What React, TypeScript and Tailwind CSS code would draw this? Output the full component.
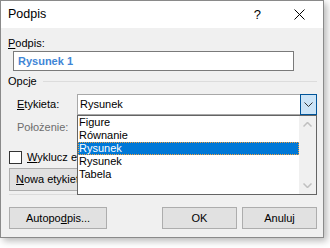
import React from "react";

const font = { fontFamily: '"Liberation Sans", Arial, sans-serif' };

function Btn({ children, className = "" }: { children: React.ReactNode; className?: string }) {
  return (
    <div
      className={
        "h-[22px] flex items-center justify-center bg-[#e1e1e1] border border-[#adadad] text-[11px] text-black " +
        className
      }
    >
      {children}
    </div>
  );
}

export default function App() {
  const items = ["Figure", "Równanie", "Rysunek", "Rysunek", "Tabela"];
  return (
    <div className="w-[330px] h-[248px] bg-white overflow-hidden" style={font}>
      <div className="relative w-[324px] h-[238px] border border-[#8a8a8a] bg-[#f0f0f0] shadow-[3px_3px_7px_rgba(0,0,0,0.28)] flex flex-col">
        {/* Title bar */}
        <div className="h-[27px] bg-white flex items-center shrink-0">
          <span className="ml-[7px] text-[12.5px] text-black">Podpis</span>
          <span className="ml-auto mr-[33px] text-[13px] text-black">?</span>
          <svg width="11" height="11" viewBox="0 0 11 11" className="mr-[18px]">
            <path d="M0.5 0.5 L10.5 10.5 M10.5 0.5 L0.5 10.5" stroke="#000" strokeWidth="1" />
          </svg>
        </div>

        {/* Body */}
        <div className="flex flex-col text-[11px] text-black">
          <div className="mt-[7px] ml-[7px] h-[16px] leading-[16px]">
            <u>P</u>odpis:
          </div>
          <div className="ml-[12px] w-[281px] h-[20px] border border-[#7a7a7a] bg-white flex items-center pl-[4px]">
            <span className="font-bold text-[#3f86d6]">Rysunek 1</span>
          </div>
          <div className="mt-[2px] ml-[7px] h-[16px] flex items-center">
            <span>Opcje</span>
            <div className="ml-[6px] flex-1 h-px bg-[#dcdcdc] mr-[6px]" />
          </div>
          <div className="mt-[5px] h-[21px] flex items-center">
            <span className="ml-[16px] w-[60px]">
              <u>E</u>tykieta:
            </span>
            <div className="w-[240px] h-[21px] border border-[#a8a8a8] bg-white flex items-center">
              <span className="ml-[2px] flex-1">Rysunek</span>
              <div className="w-[17px] h-[21px] -mr-px -mt-px -mb-px border border-[#005499] bg-[#cce4f7] flex items-center justify-center">
                <svg width="9" height="5" viewBox="0 0 9 5">
                  <path d="M0.5 0.5 L4.5 4.5 L8.5 0.5" stroke="#333" strokeWidth="1" fill="none" />
                </svg>
              </div>
            </div>
          </div>
          <div className="mt-[4px] ml-[16px] h-[16px] leading-[16px] text-[#6d6d6d]">Położenie:</div>
          <div className="mt-[15px] ml-[8px] h-[14px] flex items-center">
            <div className="w-[13px] h-[13px] border border-[#333] bg-white" />
            <span className="ml-[5px]">
              <u>W</u>yklucz etykietę z podpisu
            </span>
          </div>
          <div className="mt-[4px] ml-[8px] flex">
            <Btn className="w-[110px] h-[23px] justify-start pl-[6px]">
              <span>
                <u>N</u>owa etykieta...
              </span>
            </Btn>
          </div>
          <div className="mt-[3px] ml-[8px] mr-[6px] h-px bg-[#dcdcdc]" />
          <div className="mt-[12px] ml-[8px] flex">
            <Btn className="w-[98px]">
              <span>
                Autopo<u>d</u>pis...
              </span>
            </Btn>
            <Btn className="ml-[55px] w-[75px]">OK</Btn>
            <Btn className="ml-[5px] w-[75px]">Anuluj</Btn>
          </div>
        </div>

        {/* Dropdown list overlay */}
        <div className="absolute left-[76px] top-[114px] w-[240px] h-[80px] border border-[#646464] bg-white flex text-[11px] text-black">
          <div className="flex-1 flex flex-col">
            {items.map((it, i) => (
              <div
                key={i}
                className={
                  "h-[13px] leading-[13px] pl-[1px] " +
                  (i === 2 ? "bg-[#0078d7] text-white outline-1 outline-dotted outline-[#f0a040] -outline-offset-1" : "")
                }
              >
                {it}
              </div>
            ))}
          </div>
          <div className="w-[17px] bg-[#f0f0f0] flex flex-col items-center justify-between py-[6px]">
            <svg width="9" height="5" viewBox="0 0 9 5">
              <path d="M0.5 4.5 L4.5 0.5 L8.5 4.5" stroke="#c0c0c0" strokeWidth="1.5" fill="none" />
            </svg>
            <svg width="9" height="5" viewBox="0 0 9 5">
              <path d="M0.5 0.5 L4.5 4.5 L8.5 0.5" stroke="#c0c0c0" strokeWidth="1.5" fill="none" />
            </svg>
          </div>
        </div>
      </div>
    </div>
  );
}
